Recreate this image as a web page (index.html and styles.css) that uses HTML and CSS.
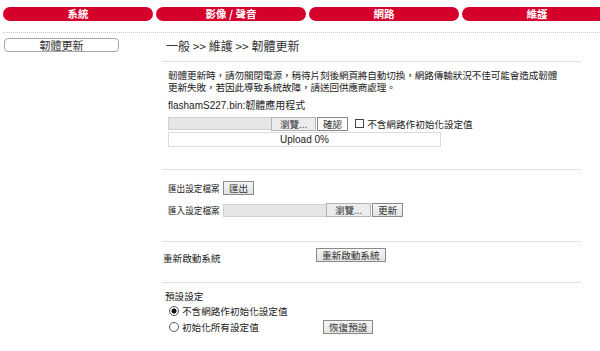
FILE: index.html
```html
<!DOCTYPE html>
<html lang="zh-Hant">
<head>
<meta charset="utf-8">
<title>韌體更新</title>
<link rel="stylesheet" href="styles.css">
</head>
<body>
<nav class="tabs">
  <div class="tab">系統</div>
  <div class="tab">影像 / 聲音</div>
  <div class="tab">網路</div>
  <div class="tab">維護</div>
</nav>
<div class="rule top-rule"></div>
<div class="main">
  <aside class="side">
    <div class="side-item">韌體更新</div>
  </aside>
  <section class="content">
    <div class="crumb">一般 &gt;&gt; 維護 &gt;&gt; 韌體更新</div>
    <div class="rule"></div>
    <div class="block fw">
      <p class="note">韌體更新時，請勿關閉電源，稍待片刻後網頁將自動切換，網路傳輸狀況不佳可能會造成韌體<br>更新失敗，若因此導致系統故障，請送回供應商處理。</p>
      <p class="fname">flashamS227.bin:韌體應用程式</p>
      <div class="row">
        <span class="filebox"></span><span class="btn browse">瀏覽...</span><span class="btn ok">確認</span>
        <label class="chk"><input type="checkbox" class="cb">不含網路作初始化設定值</label>
      </div>
      <div class="upload">Upload 0%</div>
    </div>
    <div class="rule"></div>
    <div class="block cfg">
      <div class="row r-exp"><span class="lbl">匯出設定檔案</span><span class="btn">匯出</span></div>
      <div class="row r-imp"><span class="lbl">匯入設定檔案</span><span class="filebox"></span><span class="btn browse">瀏覽...</span><span class="btn">更新</span></div>
    </div>
    <div class="rule"></div>
    <div class="block reboot">
      <span class="lbl2">重新啟動系統</span><span class="btn">重新啟動系統</span>
    </div>
    <div class="rule"></div>
    <div class="block defaults">
      <div class="dtitle">預設設定</div>
      <label class="radio"><input type="radio" name="d" class="rd" checked>不含網路作初始化設定值</label>
      <div class="row r-reset">
        <label class="radio"><input type="radio" name="d" class="rd">初始化所有設定值</label>
        <span class="btn">恢復預設</span>
      </div>
    </div>
  </section>
</div>
</body>
</html>
```
FILE: styles.css
```css
html, body { margin: 0; padding: 0; overflow: hidden; background: #fff; }
body {
  font-family: "Noto Sans CJK TC", "Liberation Sans", sans-serif;
  font-size: 9.6px;
  color: #222;
  width: 600px;
}
.tabs {
  display: flex;
  gap: 3px;
  padding: 7px 0 0 3px;
  width: 597px;
  overflow: hidden;
}
.tab {
  flex: 0 0 150px;
  height: 14px;
  line-height: 14px;
  background: #d6002c;
  color: #fff;
  font-weight: bold;
  font-size: 10.5px;
  text-align: center;
  border-radius: 7px;
}
.rule {
  border-top: 1px dotted #c8c8c8;
  height: 0;
}
.top-rule { margin: 11px 0 0 3px; }
.main { display: flex; }
.side { width: 163px; flex: none; padding-top: 5px; }
.side-item {
  margin-left: 4px;
  width: 113px;
  height: 12px;
  line-height: 12px;
  border: 1px solid #a8a8a8;
  border-radius: 4px;
  text-align: center;
  font-size: 11px;
  color: #333;
}
.content { width: 417px; }
.crumb {
  font-size: 12px;
  color: #333;
  padding: 5px 0 0 3px;
  height: 23px;
  line-height: 16px;
}
.block { padding-left: 5px; }
.fw { padding-top: 7px; height: 100px; }
.note { margin: 0; line-height: 12px; letter-spacing: -0.1px; }
.fname { margin: 4px 0 0; font-family: "Liberation Sans", "Noto Sans CJK TC", sans-serif; font-size: 10px; }
.row { display: flex; align-items: center; }
.fw .row { margin-top: 5px; height: 13px; }
.filebox {
  display: inline-block;
  flex: none;
  width: 102px;
  height: 11px;
  background: #e6e6e6;
  border: 1px solid #d0d0d0;
  border-right: none;
}
.btn {
  display: inline-block;
  flex: none;
  height: 12px;
  line-height: 12px;
  padding: 0 5px;
  border: 1px solid #8a8a8a;
  background: linear-gradient(#f6f6f6, #e2e2e2);
  color: #333;
  font-size: 9.6px;
  white-space: nowrap;
}
.browse { width: 33px; border-color: #b4b4b4; background: #ececec; text-align: center; }
.ok { background: #fafafa; margin-left: 1px; }
.chk { display: inline-flex; align-items: center; margin-left: 7px; white-space: nowrap; }
.cb {
  appearance: none;
  -webkit-appearance: none;
  width: 9px; height: 9px;
  margin: 0 3px 0 0;
  border: 1px solid #444;
  background: #fff;
}
.upload {
  margin-top: 2px;
  width: 271px;
  height: 13px;
  line-height: 13px;
  border: 1px solid #dcdcdc;
  text-align: center;
  font-family: "Liberation Sans", sans-serif;
  font-size: 10px;
  color: #222;
}
.cfg { padding-top: 11px; height: 60px; }
.lbl { flex: none; width: 55px; font-size: 8.6px; white-space: nowrap; }
.r-exp { height: 14px; }
.r-imp { margin-top: 8px; height: 14px; }
.r-imp .filebox { width: 102px; }
.r-imp .btn:last-child { margin-left: 1px; }
.reboot {
  padding: 6px 0 0 0;
  height: 34px;
  display: flex;
  align-items: flex-start;
}
.reboot .lbl2 { width: 153px; padding-top: 3px; }
.defaults { padding-top: 6px; padding-left: 2px; }
.dtitle { height: 14px; line-height: 14px; }
.radio { display: flex; align-items: center; height: 16px; padding-left: 4px; white-space: nowrap; }
.rd {
  appearance: none;
  -webkit-appearance: none;
  width: 10px; height: 10px;
  margin: 0 3px 0 0;
  border: 1px solid #555;
  border-radius: 50%;
  background: #fff;
}
.rd:checked { background: radial-gradient(circle, #111 0 2.3px, #fff 2.8px); }
.r-reset { height: 16px; }
.r-reset .radio { width: 154px; }
```
